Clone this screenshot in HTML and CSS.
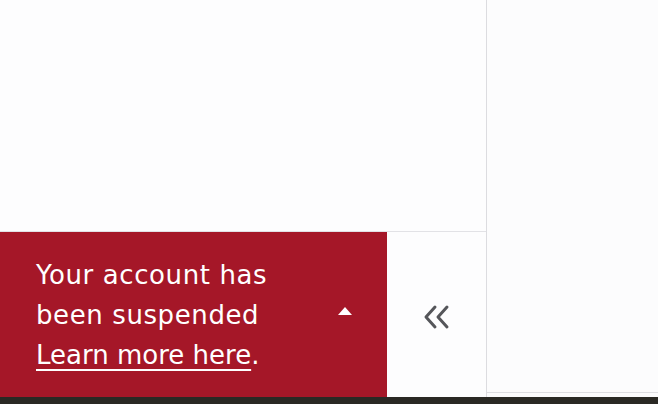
FILE: index.html
```html
<!DOCTYPE html>
<html>
<head>
<meta charset="utf-8">
<link rel="stylesheet" href="styles.css">
</head>
<body>
<div class="app">
  <div class="main">
    <div class="content"></div>
    <div class="bottom">
      <div class="banner">
        <p class="msg">Your account has<br>been suspended<br><a href="#" class="link">Learn more here</a>.</p>
        <svg class="caret" width="16" height="10" viewBox="0 0 16 10"><polygon points="8,1 15,9 1,9" fill="#fff"/></svg>
      </div>
      <div class="collapse">
        <svg width="30" height="26" viewBox="0 0 30 26"><path d="M14 3 L5 13 L14 23 M26 3 L17 13 L26 23" fill="none" stroke="#55565a" stroke-width="3" stroke-linecap="round" stroke-linejoin="round"/></svg>
      </div>
    </div>
  </div>
  <div class="side"><div class="side-inner"></div></div>
</div>
<div class="strip"></div>
</body>
</html>
```
FILE: styles.css
```css
html, body { margin: 0; padding: 0; }
body { width: 658px; height: 404px; background: #fcfcfd; font-family: "DejaVu Sans", "Open Sans", sans-serif; overflow: hidden; }
.app { display: flex; height: 397px; }
.main { width: 486px; display: flex; flex-direction: column; border-right: 1px solid #dcdce0; }
.content { height: 231px; border-bottom: 1px solid #e2e2e6; background: #fdfdfe; }
.bottom { flex: 1; display: flex; }
.banner { width: 387px; background: #a51728; display: flex; align-items: center; justify-content: space-between; padding: 0 34px 0 36px; box-sizing: border-box; }
.msg { margin: 0; color: #fff; font-size: 26px; line-height: 40px; font-weight: normal; letter-spacing: 0.6px; }
.link { color: #fff; letter-spacing: 0; text-decoration: underline; text-underline-offset: 5px; text-decoration-thickness: 2px; }
.caret { margin-top: -8px; }
.collapse { flex: 1; background: #fdfdfe; display: flex; align-items: center; justify-content: center; padding-right: 2px; padding-top: 4px; }
.side { flex: 1; padding-bottom: 4px; }
.side-inner { height: 100%; border-bottom: 1px solid #dedee2; box-sizing: border-box; background: #fcfcfd; }
.strip { height: 7px; background: #2a2924; }
```
